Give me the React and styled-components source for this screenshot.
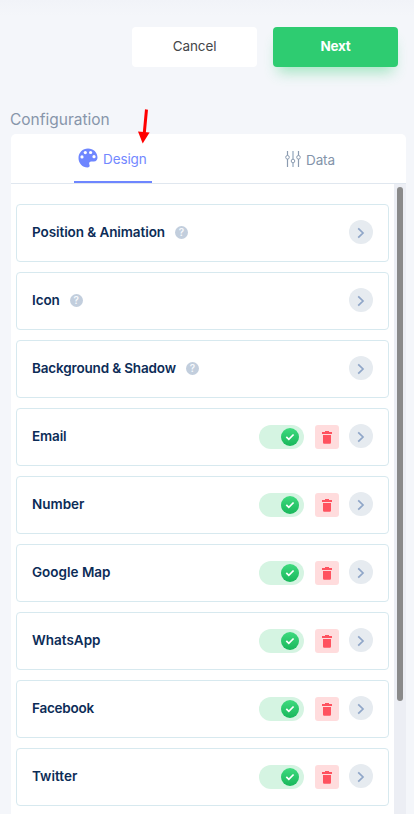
import React from "react";
import styled, { createGlobalStyle } from "styled-components";

const GlobalStyle = createGlobalStyle`
  * { box-sizing: border-box; }
  body { margin: 0; background: #f4f6fa; overflow: hidden; }
  button { font: inherit; border: 0; padding: 0; margin: 0; }
`;

const Page = styled.main`
  width: 414px;
  height: 814px;
  overflow: hidden;
  background: linear-gradient(#f1f3f8, #f4f6fa 16px);
  font-family: Inter, "Liberation Sans", sans-serif;
  display: flex;
  flex-direction: column;
`;

const Actions = styled.header`
  display: flex;
  justify-content: flex-end;
  gap: 16px;
  padding: 27px 16px 0 0;
  height: 109px;
  flex: none;
`;

const ActionButton = styled.button`
  width: 125px;
  height: 40px;
  border-radius: 4px;
  font-size: 13.5px;
  line-height: 39px;
  padding-bottom: 1px;
  font-weight: ${(p) => (p.$primary ? 700 : 400)};
  letter-spacing: ${(p) => (p.$primary ? "-0.3px" : "-0.1px")};
  color: ${(p) => (p.$primary ? "#fff" : "#44464a")};
  background: ${(p) => (p.$primary ? "#2ecc71" : "#fff")};
  box-shadow: ${(p) => (p.$primary ? "0 10px 14px -5px rgba(46, 204, 113, 0.42)" : "none")};
`;

const Title = styled.h1`
  margin: 0;
  padding-left: 10px;
  height: 25px;
  flex: none;
  font-size: 15.5px;
  line-height: 21px;
  font-weight: 400;
  letter-spacing: 0;
  color: #8795aa;
`;

const Panel = styled.section`
  margin: 0 8px 0 11px;
  flex: 1;
  min-height: 0;
  border-radius: 5px 5px 0 0;
  background: #fff;
  display: flex;
  flex-direction: column;
`;

const Tabs = styled.nav`
  display: flex;
  height: 50px;
  flex: none;
  border-bottom: 1px solid #e0e7ef;
  padding-left: 63px;
  gap: 118px;
`;

const Tab = styled.div`
  display: flex;
  align-items: center;
  gap: 5px;
  width: 78px;
  height: 49px;
  padding: ${(p) => (p.$active ? "0 0 0 4px" : "1px 0 0 15px")};
  border-bottom: ${(p) => (p.$active ? "2px solid #6e86ff" : "0")};
  color: ${(p) => (p.$active ? "#7288ff" : "#8394aa")};
  font-size: 13.5px;
  letter-spacing: -0.1px;
  svg { flex: none; }
`;

const TabText = styled.span`
  padding-top: 2px;
`;

const Body = styled.div`
  flex: 1;
  min-height: 0;
  display: flex;
  justify-content: space-between;
`;

const List = styled.div`
  padding: 20px 0 0 5px;
  width: 378px;
  display: flex;
  flex-direction: column;
  gap: 10px;
  overflow: hidden;
`;

const Card = styled.article`
  height: 58px;
  flex: none;
  border: 1px solid #d7e9ef;
  border-radius: 4px;
  padding: 0 15px 2px;
  display: flex;
  align-items: center;
`;

const Label = styled.span`
  font-size: 13.5px;
  line-height: 20px;
  font-weight: 600;
  color: #0c2c57;
  letter-spacing: ${(p) => p.$tracking}px;
  white-space: nowrap;
`;

const Help = styled.span`
  width: 13px;
  height: 13px;
  border-radius: 50%;
  margin-left: 10px;
  background: #c2cedd;
  color: #f6f9fc;
  font-size: 10px;
  line-height: 13px;
  font-weight: 600;
  text-align: center;
`;

const Controls = styled.div`
  margin-left: auto;
  display: flex;
  align-items: flex-start;
`;

const Switch = styled.div`
  width: 45px;
  height: 24px;
  margin: 1px 11px -1px 0;
  border-radius: 12px;
  background: #d5f4e2;
  padding: 3px 5px;
  display: flex;
  justify-content: flex-end;
`;

const Knob = styled.div`
  width: 18px;
  height: 18px;
  border-radius: 50%;
  background: linear-gradient(#3fda7e, #18b75b);
  display: flex;
  align-items: center;
  justify-content: center;
`;

const DeleteButton = styled.button`
  width: 24px;
  height: 24px;
  margin: 1px 10px -1px 0;
  border-radius: 3px;
  background: #ffdcdd;
  display: flex;
  align-items: center;
  justify-content: center;
`;

const OpenButton = styled.button`
  width: 24px;
  height: 24px;
  border-radius: 50%;
  background: #e6ebf0;
  display: flex;
  align-items: center;
  justify-content: center;
`;

const Track = styled.div`
  width: 12px;
  background: #eceef4;
  padding: 3px 3px 0;
`;

const Thumb = styled.div`
  height: 514px;
  border-radius: 3px;
  background: #8a8a8a;
`;

const Pointer = styled.svg`
  position: absolute;
  left: 136px;
  top: 107px;
`;

const PaletteIcon = () => (
  <svg width="20" height="20" viewBox="0 0 20 20">
    <path fill="#6e86ff" d="M10 .5C4.6.5.5 4.7.5 10s4 9.500 9 9.500c1.600 0 2.400-.9 2.100-2.200l-.4-1.200c-.3-1.500.6-2.400 2-2.500h2.600c2.500 0 3.700-1.700 3.700-4C19.500 4.400 15.300.5 10 .5z" />
    <g fill="#fff">
      <circle cx="4" cy="8.900" r="1.600" />
      <circle cx="7.300" cy="4.600" r="1.600" />
      <circle cx="12.600" cy="4.500" r="1.600" />
      <circle cx="16" cy="8.700" r="1.600" />
    </g>
  </svg>
);

const SlidersIcon = () => (
  <svg width="16" height="18" viewBox="0 0 16 18" fill="none" stroke="#8b9bb0">
    <path strokeWidth="1.2" d="M2.500 1v4.500M2.500 9v8M13.500 1v4.500M13.500 9v8" />
    <path stroke="#becad7" strokeWidth="2" d="M8 1v8M8 13v4" />
    <circle cx="2.500" cy="7.300" r="1.800" />
    <circle cx="8" cy="11" r="1.800" />
    <circle cx="13.500" cy="7.300" r="1.800" />
  </svg>
);

const TrashIcon = () => (
  <svg width="10" height="13" viewBox="0 0 10 13" fill="#ff525f">
    <path d="M3 0h4v1h3v2H0V1h3zM1 4h8v7.200c0 1-.6 1.500-1.500 1.500h-5C1.600 12.700 1 12.200 1 11.200z" />
  </svg>
);

const rows = [
  { name: "Position & Animation", tracking: -0.08, help: true },
  { name: "Icon", tracking: -0.1, help: true },
  { name: "Background & Shadow", tracking: -0.16, help: true },
  { name: "Email", tracking: -0.15 },
  { name: "Number", tracking: 0 },
  { name: "Google Map", tracking: 0 },
  { name: "WhatsApp", tracking: 0 },
  { name: "Facebook", tracking: -0.25 },
  { name: "Twitter", tracking: 0 },
];

const SettingRow = ({ name, tracking, help }) => (
  <Card>
    <Label $tracking={tracking}>{name}</Label>
    {help && <Help>?</Help>}
    <Controls>
      {!help && (
        <>
          <Switch role="switch" aria-checked="true">
            <Knob>
              <svg width="10" height="8" viewBox="0 0 10 8" fill="none" stroke="#fff" strokeWidth="1.700">
                <path d="M1.300 3.900 3.800 6.300 8.600 1.500" />
              </svg>
            </Knob>
          </Switch>
          <DeleteButton aria-label="Delete"><TrashIcon /></DeleteButton>
        </>
      )}
      <OpenButton aria-label="Open">
        <svg width="24" height="24" viewBox="0 0 24 24" fill="none" stroke="#8fa6c8" strokeWidth="1.700">
          <path d="M9.200 8.300 14 13 9.200 17.700" />
        </svg>
      </OpenButton>
    </Controls>
  </Card>
);

export default function App() {
  return (
    <Page>
      <GlobalStyle />
      <Actions>
        <ActionButton>Cancel</ActionButton>
        <ActionButton $primary>Next</ActionButton>
      </Actions>
      <Title>Configuration</Title>
      <Panel>
        <Tabs>
          <Tab $active><PaletteIcon /><TabText>Design</TabText></Tab>
          <Tab><SlidersIcon /><TabText>Data</TabText></Tab>
        </Tabs>
        <Body>
          <List>{rows.map((row) => <SettingRow key={row.name} {...row} />)}</List>
          <Track><Thumb /></Track>
        </Body>
      </Panel>
      <Pointer width="16" height="38" viewBox="0 0 16 38">
        <path d="M10.500 2.500 8.200 27" stroke="#f00" strokeWidth="3" />
        <path d="M2 24.500 13.600 25.500 6.700 36.500z" fill="#f00" />
      </Pointer>
    </Page>
  );
}
